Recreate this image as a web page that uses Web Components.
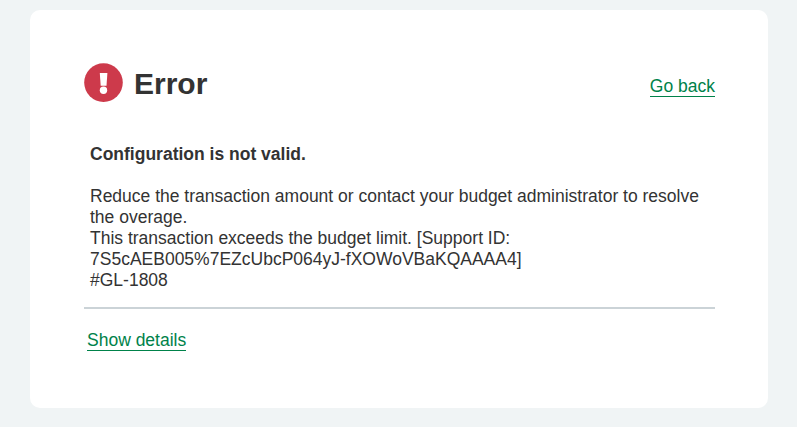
<!DOCTYPE html>
<html lang="en">
<head>
<meta charset="utf-8">
<title>Error</title>
<style>
    body {
        margin: 0;
        padding: 10px 29px 19px 30px;
        background-color: #f0f4f5;
        color: #333;
        font-family: "Liberation Sans", Arial, sans-serif;
        font-size: 17.5px;
        line-height: 21px;
    }
</style>
</head>
<body>
<error-card heading="Error">
    <text-link slot="action">Go back</text-link>
    <error-message heading="Configuration is not valid.">
        Reduce the transaction amount or contact your budget administrator to resolve the overage.<br>
        This transaction exceeds the budget limit. [Support ID: 7S5cAEB005%7EZcUbcP064yJ-fXOWoVBaKQAAAA4]<br>
        #GL-1808
    </error-message>
    <text-link slot="footer">Show details</text-link>
</error-card>

<script>
class ErrorIcon extends HTMLElement {
    connectedCallback() {
        const shadow = this.attachShadow({mode: 'open'});
        shadow.innerHTML = `
            <style>
                :host {
                    display: block;
                    width: 39px;
                    height: 39px;
                }
                svg {
                    display: block;
                }
            </style>
            <svg width="39" height="39" viewBox="0 0 39 39">
                <circle cx="19.5" cy="19.6" r="19.3" fill="#cd3a4b"/>
                <path d="M15.8 10h7.6l-.9 12.8h-5.8z" fill="#fff"/>
                <circle cx="19.5" cy="27.3" r="3.7" fill="#fff"/>
            </svg>`;
    }
}

class TextLink extends HTMLElement {
    connectedCallback() {
        const shadow = this.attachShadow({mode: 'open'});
        shadow.innerHTML = `
            <style>
                :host {
                    display: block;
                }
                a {
                    display: block;
                    padding-top: 2px;
                    color: #00824a;
                    border-bottom: 1px solid #00824a;
                    line-height: 19px;
                    text-decoration: none;
                    white-space: nowrap;
                    cursor: pointer;
                }
            </style>
            <a><slot></slot></a>`;
    }
}

class ErrorMessage extends HTMLElement {
    connectedCallback() {
        const shadow = this.attachShadow({mode: 'open'});
        shadow.innerHTML = `
            <style>
                :host {
                    display: block;
                    padding: 0 6px;
                }
                h2 {
                    margin: 0 0 21px;
                    font-size: inherit;
                }
                p {
                    margin: 0;
                }
            </style>
            <h2>${this.getAttribute('heading')}</h2>
            <p><slot></slot></p>`;
    }
}

class ErrorCard extends HTMLElement {
    connectedCallback() {
        const shadow = this.attachShadow({mode: 'open'});
        shadow.innerHTML = `
            <style>
                :host {
                    display: block;
                    box-sizing: border-box;
                    height: 398px;
                    padding: 53px 53px 0 54px;
                    border-radius: 10px;
                    background-color: #fff;
                }
                header {
                    display: flex;
                    align-items: flex-start;
                    gap: 11px;
                    height: 39px;
                }
                h1 {
                    flex: 1;
                    margin: 3px 0 0;
                    font-size: 30px;
                    line-height: 36px;
                }
                header slot {
                    display: block;
                    padding-top: 12px;
                }
                main {
                    padding: 42px 0 16px;
                    border-bottom: 2px solid #cbd3d7;
                }
                footer {
                    display: flex;
                    padding: 20px 3px 0;
                }
            </style>
            <header>
                <error-icon></error-icon>
                <h1>${this.getAttribute('heading')}</h1>
                <slot name="action"></slot>
            </header>
            <main><slot></slot></main>
            <footer><slot name="footer"></slot></footer>`;
    }
}

customElements.define('error-icon', ErrorIcon);
customElements.define('text-link', TextLink);
customElements.define('error-message', ErrorMessage);
customElements.define('error-card', ErrorCard);
</script>
</body>
</html>
